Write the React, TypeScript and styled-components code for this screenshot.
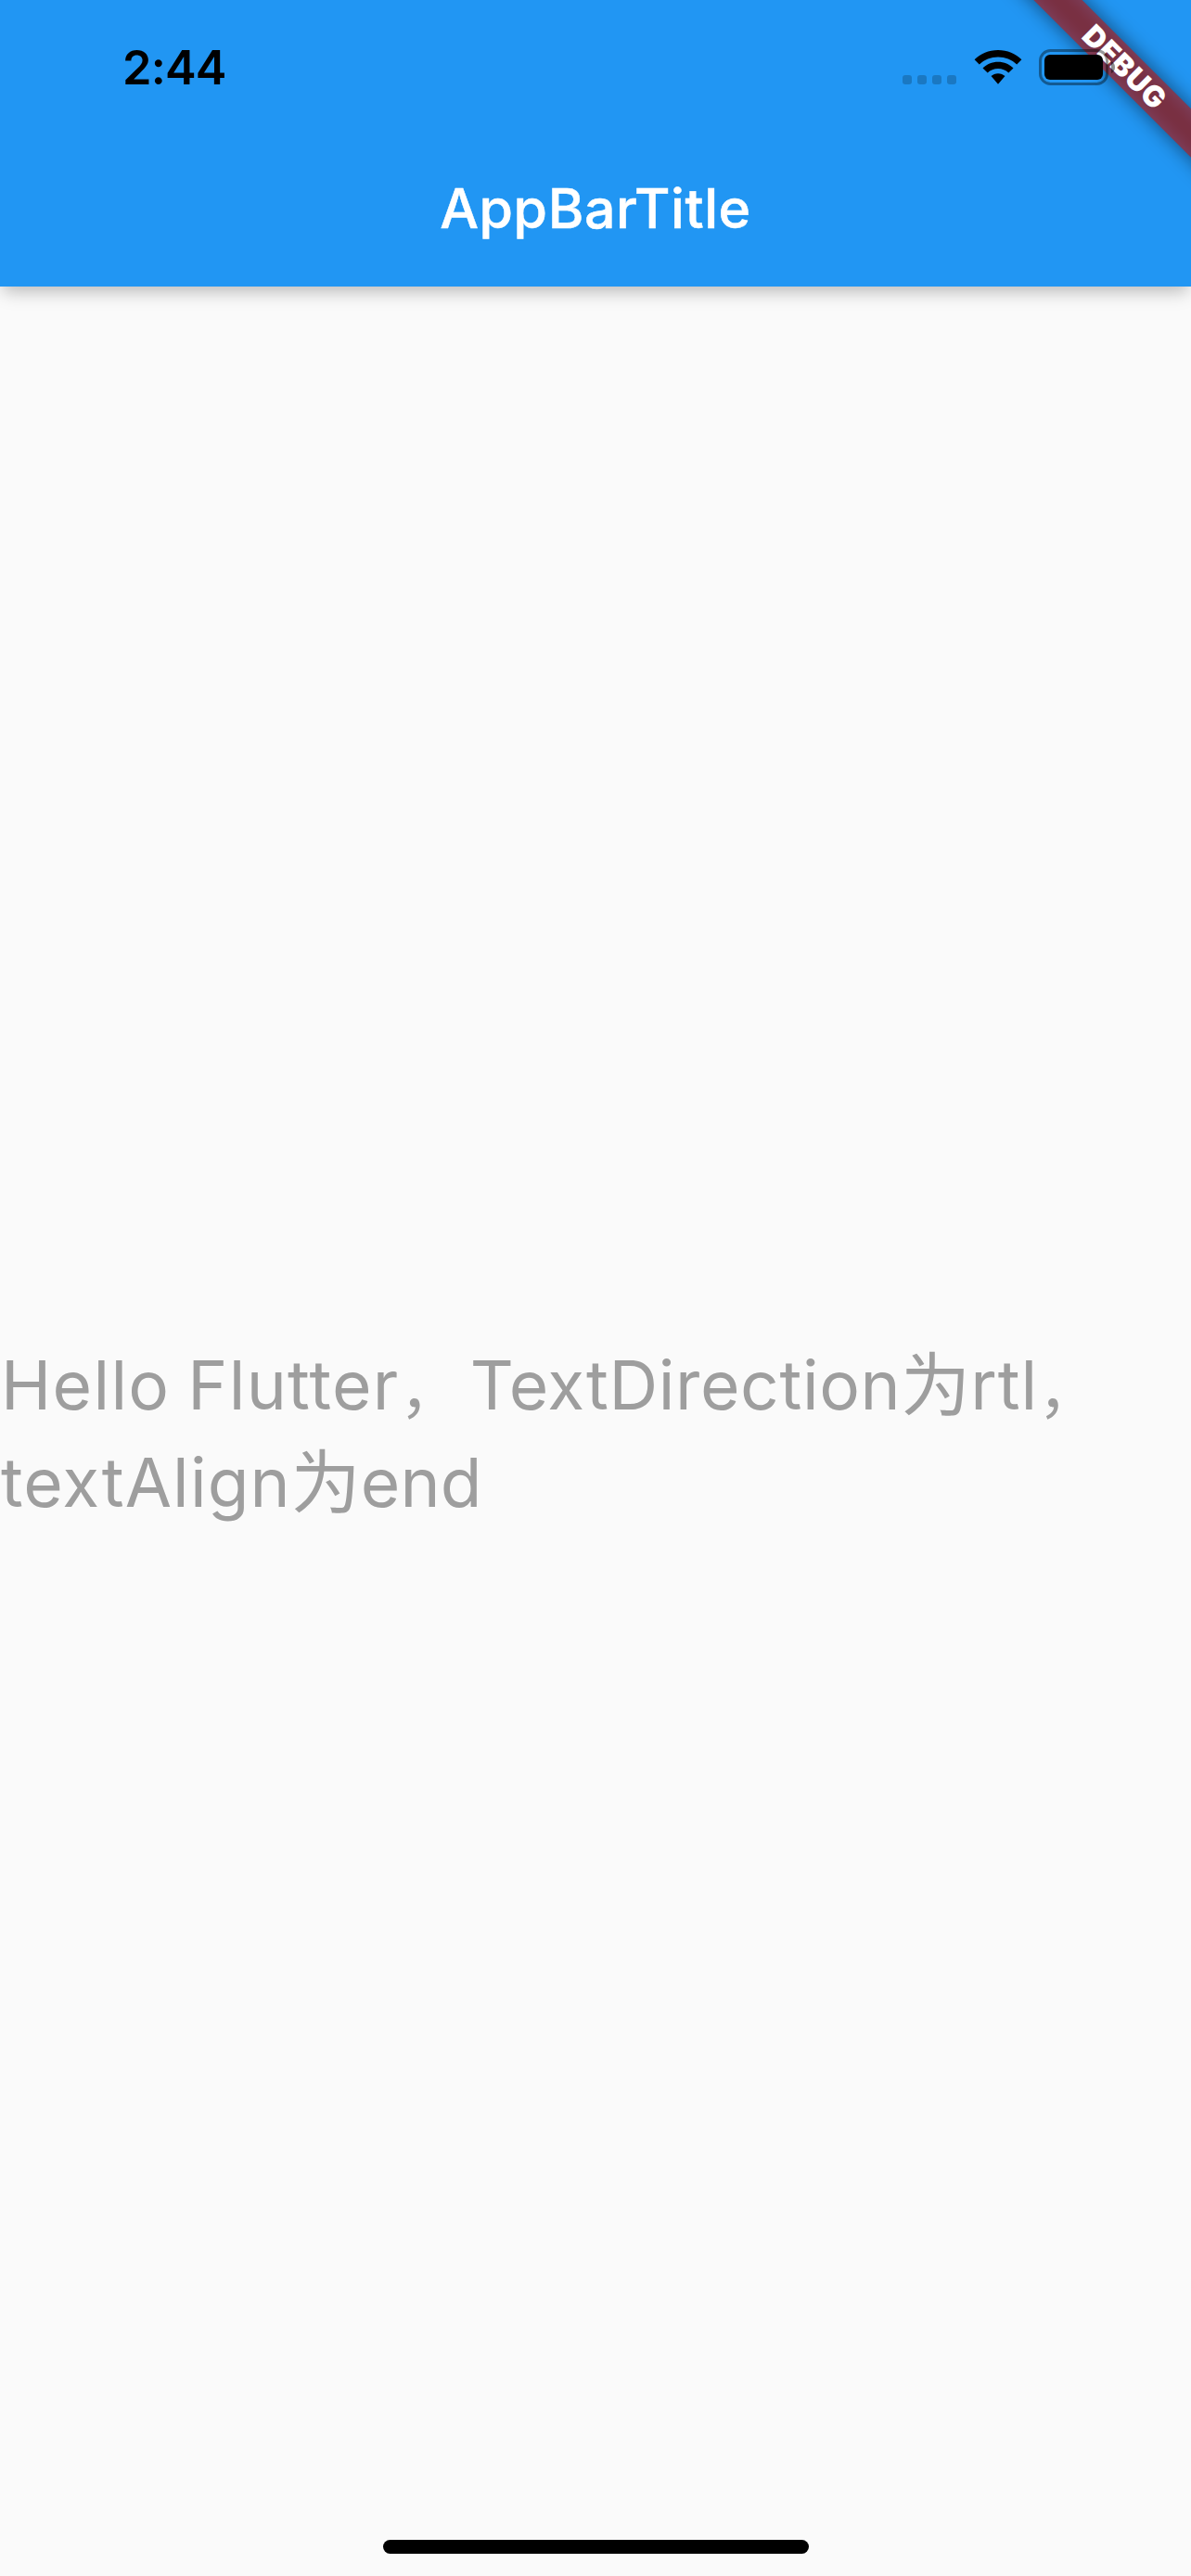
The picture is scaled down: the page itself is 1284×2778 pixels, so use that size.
import React from 'react'
import styled, { createGlobalStyle } from 'styled-components'

const GlobalStyle = createGlobalStyle`
  * {
    box-sizing: border-box;
  }

  body {
    margin: 0;
    background: #fafafa;
    font-family: Inter, 'Noto Sans CJK SC', sans-serif;
  }
`

const Screen = styled.div`
  position: relative;
  display: flex;
  flex-direction: column;
  width: 1284px;
  height: 2778px;
  overflow: hidden;
  background: #fafafa;
`

const AppBar = styled.header`
  display: flex;
  flex-direction: column;
  height: 309px;
  background: #2196f3;
  box-shadow: 0 8px 18px -3px rgba(0, 0, 0, 0.27);
`

const StatusBar = styled.div`
  position: relative;
  z-index: 2;
  display: flex;
  justify-content: space-between;
  height: 141px;
  padding: 53px 82px 0 132px;
`

const Time = styled.div`
  height: 39px;
  font-size: 50.5px;
  font-weight: 600;
  line-height: 39px;
  letter-spacing: -0.8px;
  color: #000000;
`

const StatusIcons = styled.div`
  display: flex;
  align-items: flex-start;
`

const SignalDots = styled.div`
  display: flex;
  gap: 6px;
  margin: 28px 19px 0 0;
`

const SignalDot = styled.span`
  width: 10px;
  height: 10px;
  border-radius: 3px;
  background: rgba(0, 0, 0, 0.2);
`

const WifiIcon = styled.svg`
  width: 52px;
  height: 39px;
  margin-right: 18px;
`

const BatteryIcon = styled.svg`
  width: 82px;
  height: 39px;
`

const Toolbar = styled.div`
  display: flex;
  align-items: center;
  justify-content: center;
  height: 168px;
`

const Title = styled.h1`
  margin: 0;
  font-size: 59px;
  font-weight: 500;
  line-height: 72px;
  letter-spacing: 0.55px;
  color: #ffffff;
  -webkit-text-stroke: 0.5px #ffffff;
`

const Body = styled.main`
  display: flex;
  flex: 1;
  flex-direction: column;
  justify-content: center;
`

const Message = styled.p`
  margin: 0;
  padding: 4px 0 0 1px;
  font-size: 73px;
  line-height: 105px;
  text-align: left;
  color: #9e9e9e;
`

const Line = styled.span`
  display: block;
  height: 105px;
  white-space: nowrap;
`

const Latin = styled.span<{ $spacing: number }>`
  letter-spacing: ${({ $spacing }) => $spacing}px;
  word-spacing: -3px;
`

const Han = styled.span`
  font-family: 'Noto Sans CJK SC', sans-serif;
  font-size: 75px;
  font-weight: 400;
  line-height: 1;
  vertical-align: -1px;
`

const Comma = styled(Han)`
  font-size: 66px;
  letter-spacing: 10px;
  vertical-align: -3px;
`

// Floats over the body, which keeps the full height below the app bar
const HomeIndicator = styled.div`
  position: absolute;
  bottom: 24px;
  left: 413px;
  width: 459px;
  height: 15px;
  border-radius: 8px;
  background: #000000;
`

// Diagonal ribbon over the top right corner, its centre 102px from the corner
const Banner = styled.div`
  position: absolute;
  z-index: 1;
  top: 53px;
  right: -168px;
  width: 480px;
  height: 37px;
  transform: rotate(45deg);

  &::before {
    content: '';
    position: absolute;
    inset: 0;
    background: rgba(0, 0, 0, 0.5);
    filter: blur(10.9px);
  }
`

const BannerLabel = styled.div`
  position: relative;
  height: 37px;
  padding-left: 2px;
  background: rgba(183, 28, 28, 0.627);
  font-size: 31.5px;
  font-weight: 900;
  line-height: 37px;
  letter-spacing: 0.6px;
  text-align: center;
  color: #ffffff;
`

const Wifi: React.FC = () => (
  <WifiIcon viewBox="0 0 52 39">
    <path d="M26 1C16 1 7 5 .6 11.3l5.2 5.2C11.2 11.4 18.2 8.5 26 8.5s14.8 2.9 20.2 8l5.2-5.2C45 5 36 1 26 1z" />
    <path d="M26 13.8c-6.5 0-12.3 2.6-16.5 6.6l5.2 5.2c2.9-2.8 6.9-4.5 11.3-4.5s8.4 1.7 11.3 4.5l5.2-5.2c-4.2-4-10-6.6-16.5-6.6z" />
    <path d="M26 26.2c-2.9 0-5.5 1.1-7.5 2.9L26 37.8l7.5-8.7c-2-1.8-4.6-2.9-7.5-2.9z" />
  </WifiIcon>
)

const Battery: React.FC = () => (
  <BatteryIcon viewBox="0 0 82 39">
    <rect
      x="1.5"
      y="1.5"
      width="72"
      height="36"
      rx="11"
      fill="none"
      stroke="#000"
      strokeWidth="3"
      opacity="0.4"
    />
    <path d="M78 13v13c2.5-1 4-3.5 4-6.5s-1.5-5.5-4-6.5z" opacity="0.45" />
    <rect x="6" y="6" width="63" height="27" rx="6" />
  </BatteryIcon>
)

const App: React.FC = () => {
  return (
    <Screen>
      <GlobalStyle />
      <AppBar>
        <StatusBar>
          <Time>2:44</Time>
          <StatusIcons>
            <SignalDots>
              {[0, 1, 2, 3].map((dot) => (
                <SignalDot key={dot} />
              ))}
            </SignalDots>
            <Wifi />
            <Battery />
          </StatusIcons>
        </StatusBar>
        <Toolbar>
          <Title>AppBarTitle</Title>
        </Toolbar>
      </AppBar>
      <Body>
        <Message>
          <Line>
            <Latin $spacing={1.3}>Hello Flutter</Latin>
            <Comma>，</Comma>
            <Latin $spacing={0.6}>TextDirection</Latin>
            <Han>为</Han>
            <Latin $spacing={0.8}>rtl</Latin>
            <Comma>，</Comma>
          </Line>
          <Line>
            <Latin $spacing={1.1}>textAlign</Latin>
            <Han>为</Han>
            <Latin $spacing={0.1}>end</Latin>
          </Line>
        </Message>
      </Body>
      <HomeIndicator />
      <Banner>
        <BannerLabel>DEBUG</BannerLabel>
      </Banner>
    </Screen>
  )
}

export default App
